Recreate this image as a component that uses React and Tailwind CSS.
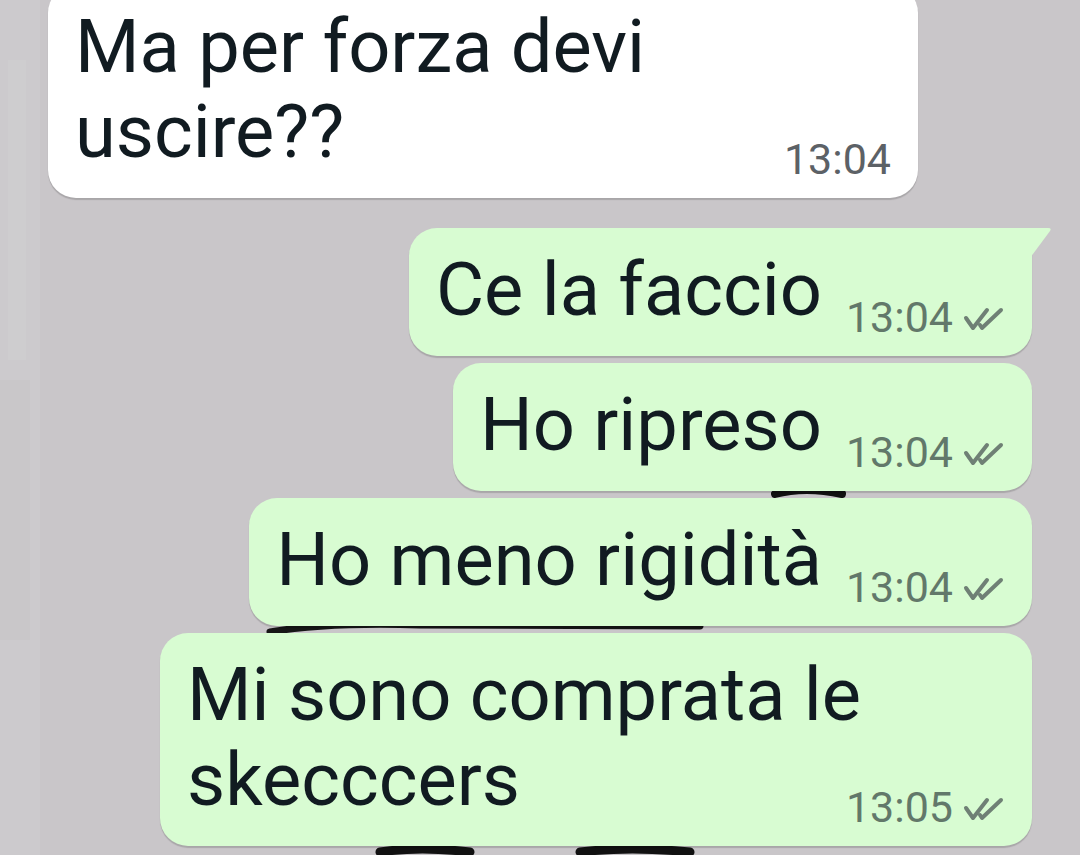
import React from 'react'

function Ticks() {
  return (
    <svg viewBox="0 0 42 24" className="w-[42px] h-[24px] mb-[8px] shrink-0" fill="none" stroke="#6f8075" strokeWidth="4" strokeLinecap="round" strokeLinejoin="round">
      <path d="M3 11 L10 21 L24 3" />
      <path d="M17 18 L19 21 L38 3" />
    </svg>
  )
}

function Meta({ time, out }) {
  return (
    <div className="flex items-end gap-[10px] -mb-[7px] shrink-0">
      <span className={out ? 'text-[43px] leading-none text-[#62786a]' : 'text-[43px] leading-none text-[#5c6166]'}>{time}</span>
      {out && <Ticks />}
    </div>
  )
}

function Bubble({ lines, time, out, tail, width }) {
  const base = out
    ? 'relative bg-[#d8fcd2] rounded-[28px] shadow-[0_2px_1px_rgba(0,0,0,0.16)] px-[27px] pt-[19px] pb-[24px]'
    : 'relative bg-white rounded-[28px] shadow-[0_2px_1px_rgba(0,0,0,0.16)] px-[27px] pt-[19px] pb-[24px]'

  if (lines.length > 1) {
    return (
      <div className={base + (tail ? ' rounded-tr-none' : '')} style={{ width }}>
        <div className="grid">
          <p className="[grid-area:1/1] text-[74px] leading-[85px] text-[#111b21]">
            {lines.map((l, i) => (
              <span key={i} className="block whitespace-nowrap">{l}</span>
            ))}
          </p>
          <div className="[grid-area:1/1] self-end justify-self-end">
            <Meta time={time} out={out} />
          </div>
        </div>
      </div>
    )
  }

  return (
    <div className={base + ' flex items-end gap-[24px]' + (tail ? ' rounded-tr-none' : '')}>
      <p className="text-[74px] leading-[85px] text-[#111b21] whitespace-nowrap">{lines[0]}</p>
      <Meta time={time} out={out} />
      {tail && (
        <svg viewBox="0 0 22 32" className="absolute top-0 -right-[20px] w-[22px] h-[32px]">
          <path d="M0 0 L18 0 Q22 0 20 3 L0 30 Z" fill="#d8fcd2" />
        </svg>
      )}
    </div>
  )
}

function Wallpaper() {
  return (
    <svg className="absolute inset-0 w-full h-full" viewBox="0 0 1080 855" fill="none">
      <rect x="0" y="0" width="40" height="855" fill="#cccacd" />
      <rect x="8" y="60" width="18" height="300" fill="#d0cfd1" opacity="0.5" />
      <rect x="0" y="380" width="30" height="260" fill="#c5c3c6" opacity="0.5" />
      <path d="M775 494 Q805 486 842 494" stroke="#111" strokeWidth="8" strokeLinecap="round" />
      <path d="M270 632 Q330 622 420 625 L700 626" stroke="#161616" strokeWidth="7" strokeLinecap="round" />
      <path d="M380 852 Q420 846 470 852" stroke="#111" strokeWidth="9" strokeLinecap="round" />
      <path d="M580 852 Q630 846 690 852" stroke="#111" strokeWidth="9" strokeLinecap="round" />
    </svg>
  )
}

export default function App() {
  return (
    <div className="relative w-[1080px] h-[855px] overflow-hidden bg-[#c9c6c9] font-['Roboto','Liberation_Sans',sans-serif]">
      <Wallpaper />
      <div className="relative flex flex-col -mt-[15px]">
        <div className="ml-[48px] self-start">
          <Bubble lines={['Ma per forza devi', 'uscire??']} time="13:04" width={870} />
        </div>
        <div className="flex flex-col items-end gap-[7px] mr-[48px] mt-[30px]">
          <Bubble lines={['Ce la faccio']} time="13:04" out tail />
          <Bubble lines={['Ho ripreso']} time="13:04" out />
          <Bubble lines={['Ho meno rigidità']} time="13:04" out />
          <Bubble lines={['Mi sono comprata le', 'skecccers']} time="13:05" out width={872} />
        </div>
      </div>
    </div>
  )
}
